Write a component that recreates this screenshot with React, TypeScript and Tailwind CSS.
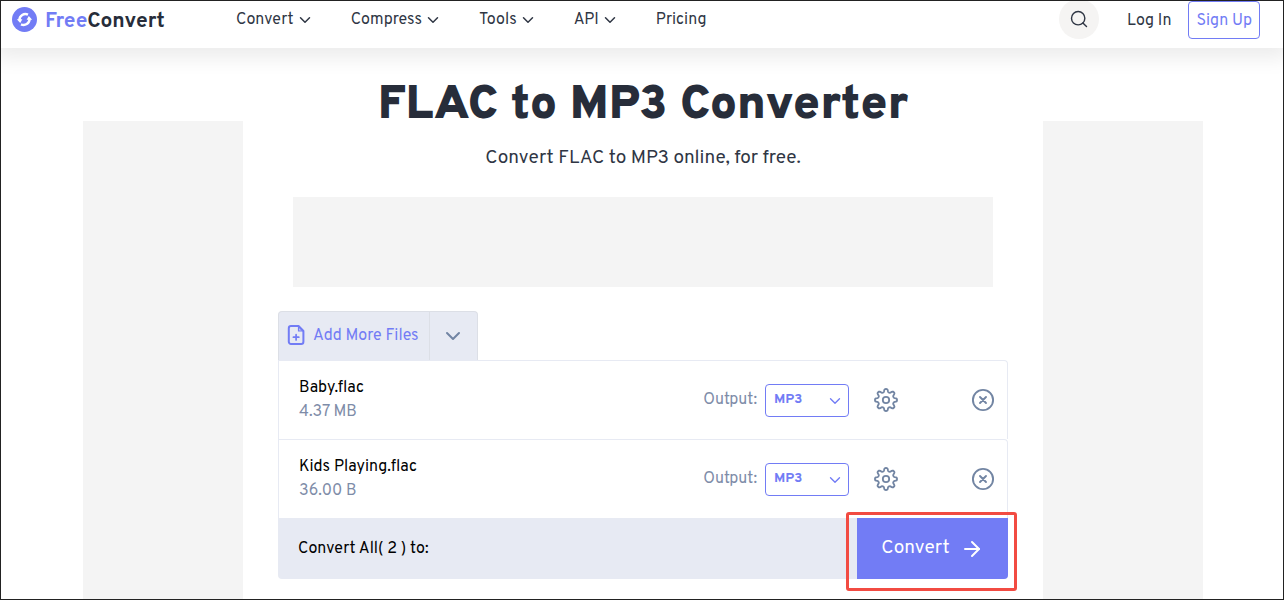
import { ArrowRight, ChevronDown, Search } from "lucide-react"

type FileItem = {
  id: string
  name: string
  size: string
}

const navItems = [
  { label: "Convert", hasMenu: true },
  { label: "Compress", hasMenu: true },
  { label: "Tools", hasMenu: true },
  { label: "API", hasMenu: true },
  { label: "Pricing", hasMenu: false },
]

const files: FileItem[] = [
  { id: "baby", name: "Baby.flac", size: "4.37 MB" },
  { id: "kids", name: "Kids Playing.flac", size: "36.00 B" },
]

// Eight rounded teeth around a 24x24 centre
const gearPath =
  Array.from({ length: 144 }, (_, i) => {
    const angle = (i / 144) * Math.PI * 2
    const r = 9.5 + 1.6 * Math.tanh(1.8 * Math.cos(angle * 8))
    const x = 12 + r * Math.sin(angle)
    const y = 12 - r * Math.cos(angle)
    return `${i === 0 ? "M" : "L"}${x.toFixed(2)} ${y.toFixed(2)}`
  }).join("") + "Z"

function LogoIcon() {
  return (
    <svg viewBox="0 0 25 25" className="size-[25px]" aria-hidden="true">
      <circle cx="12.5" cy="12.5" r="12.5" fill="#727cf5" />
      <g fill="none" stroke="#fff" strokeWidth="2.4">
        <path d="M16 7.6A6 6 0 0 0 7.4 13" />
        <path d="M9 17.4A6 6 0 0 0 17.6 12" />
      </g>
      <path d="M4.8 12.2H10.4L8.2 16Z" fill="#fff" />
      <path d="M20.2 12.8H14.6L16.8 9Z" fill="#fff" />
    </svg>
  )
}

function FileAddIcon() {
  return (
    <svg
      viewBox="0 0 18 22"
      className="h-[22px] w-[18px]"
      fill="none"
      stroke="currentColor"
      strokeWidth="2"
      strokeLinecap="round"
      strokeLinejoin="round"
      aria-hidden="true"
    >
      <path d="M11.5 1H4a2.2 2.2 0 0 0-2.2 2.2v13.6A2.2 2.2 0 0 0 4 19h10.2a2.2 2.2 0 0 0 2.2-2.2V6z" />
      <path d="M11.5 1v5h4.9z" fill="currentColor" fillOpacity="0.3" strokeWidth="1.2" />
      <path d="M9.1 9.5v5.4M6.4 12.2h5.4" strokeWidth="1.7" />
    </svg>
  )
}

function GearIcon() {
  return (
    <svg
      viewBox="0 0 24 24"
      className="size-6"
      fill="none"
      stroke="currentColor"
      strokeWidth="1.8"
      strokeLinejoin="round"
      aria-hidden="true"
    >
      <path d={gearPath} />
      <circle cx="12" cy="12" r="3.2" />
    </svg>
  )
}

function RemoveIcon() {
  return (
    <svg
      viewBox="0 0 24 24"
      className="size-6"
      fill="none"
      stroke="currentColor"
      strokeWidth="1.9"
      strokeLinecap="round"
      aria-hidden="true"
    >
      <circle cx="12" cy="12" r="10.1" />
      <path d="m9 9 6 6M15 9l-6 6" />
    </svg>
  )
}

function Header() {
  return (
    <header className="flex h-[47px] shrink-0 items-start bg-white pr-[23px] pl-[11px] shadow-[0_4px_20px_6px_rgba(0,0,0,0.08)]">
      <a
        href="#"
        className="mt-[6px] flex w-[217px] items-start gap-2 text-[21px] leading-[25px] font-bold"
      >
        <LogoIcon />
        <span className="pt-0.5 text-[#272d3a]">
          <span className="text-[#727cf5]">Free</span>Convert
        </span>
      </a>
      <nav className="mt-[7px] ml-[7px] flex flex-1 gap-[37px]">
        {navItems.map((item) =>
          item.hasMenu ? (
            <button key={item.label} type="button" className="flex items-center gap-0.5">
              {item.label}
              <ChevronDown className="size-[18px]" />
            </button>
          ) : (
            <a key={item.label} href="#">
              {item.label}
            </a>
          )
        )}
      </nav>
      <div className="flex items-center">
        <button
          type="button"
          aria-label="Search"
          className="-mt-0.5 mr-7 flex size-10 items-center justify-center rounded-full bg-[#f5f4f3]"
        >
          <Search className="size-5" strokeWidth={1.7} />
        </button>
        <a href="#" className="mr-[17px] pt-0.5">
          Log In
        </a>
        <a
          href="#"
          className="flex h-[38px] items-center rounded border border-[#727cf5] px-[7px] pt-0.5 text-[#727cf5]"
        >
          Sign Up
        </a>
      </div>
    </header>
  )
}

function FileRow({ file }: { file: FileItem }) {
  const selectId = `output-${file.id}`
  return (
    <li className="flex h-[79px] items-center rounded-tr border border-b-0 border-[#e7eaf3] pr-3 pl-5">
      <div className="flex-1 leading-6">
        <p className="text-black">{file.name}</p>
        <p className="text-[#7e8ca8]">{file.size}</p>
      </div>
      <label htmlFor={selectId} className="mr-2 text-[#7e8ca8]">
        Output:
      </label>
      <div className="relative mr-[25px]">
        <select
          id={selectId}
          className="h-[33px] w-[84px] appearance-none rounded border border-[#727cf5] bg-white px-2 text-sm font-bold text-[#727cf5]"
        >
          <option>MP3</option>
        </select>
        <ChevronDown
          className="pointer-events-none absolute top-2 right-[5px] size-[18px] text-[#727cf5]"
          strokeWidth={1.8}
        />
      </div>
      <button type="button" aria-label="Settings" className="mr-[73px] text-[#7285a3]">
        <GearIcon />
      </button>
      <button type="button" aria-label="Remove file" className="text-[#7285a3]">
        <RemoveIcon />
      </button>
    </li>
  )
}

function Converter() {
  return (
    <section className="mt-6 w-full max-w-[730px]">
      <div className="flex h-[49px] w-fit rounded-t border border-b-0 border-[#dcdfe6] bg-[#e7eaf3]">
        <button type="button" className="flex items-center gap-2 pr-[10px] pl-2 text-[#727cf5]">
          <FileAddIcon />
          Add More Files
        </button>
        <button
          type="button"
          aria-label="More sources"
          className="flex w-12 items-center justify-center border-l border-[#dcdfe6] text-[#7285a3]"
        >
          <ChevronDown className="size-6" />
        </button>
      </div>
      <ul>
        {files.map((file) => (
          <FileRow key={file.id} file={file} />
        ))}
      </ul>
      <div className="flex h-[61px] items-stretch rounded-b bg-[#e7eaf3] pl-5">
        <p className="flex flex-1 items-center text-black">Convert All( 2 ) to:</p>
        <div className="relative">
          <button
            type="button"
            className="flex h-full w-[151px] items-center justify-center gap-[10px] rounded-br bg-[#727cf5] text-[19px] text-white"
          >
            Convert
            <ArrowRight className="size-6" />
          </button>
          <span className="pointer-events-none absolute -top-[6px] -right-[9px] -bottom-3 -left-[11px] rounded-[3px] border-3 border-[#f24b42]" />
        </div>
      </div>
    </section>
  )
}

export default function App() {
  return (
    <div className="flex h-screen flex-col overflow-hidden border border-[#222] bg-white font-['Overpass','Roboto',sans-serif] text-base text-[#2f3644]">
      <Header />
      <div className="flex flex-1 justify-center pl-0.5">
        <aside className="mt-[73px] w-40 shrink-0 bg-[#f4f4f4]" />
        <main className="flex w-[800px] flex-col items-center px-[35px]">
          <h1 className="mt-7 text-5xl leading-[60px] font-black text-[#272d3a]">
            FLAC to MP3 Converter
          </h1>
          <p className="mt-[6px] text-[19px] leading-8">Convert FLAC to MP3 online, for free.</p>
          <div className="mt-[23px] h-[90px] w-full max-w-[700px] shrink-0 bg-[#f4f4f4]" />
          <Converter />
        </main>
        <aside className="mt-[73px] w-40 shrink-0 bg-[#f4f4f4]" />
      </div>
    </div>
  )
}
